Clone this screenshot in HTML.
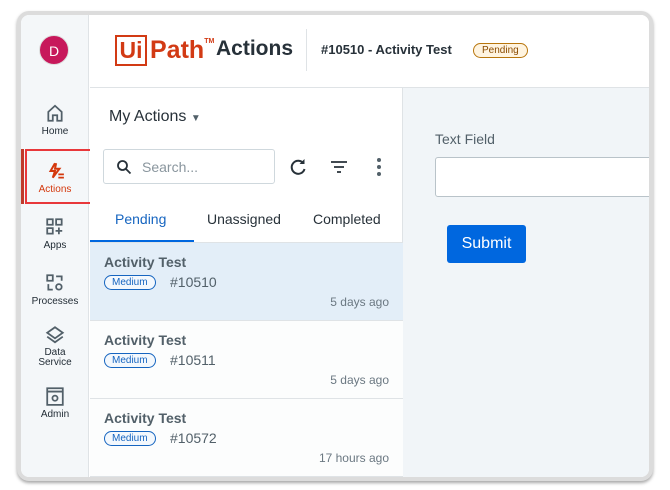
<!DOCTYPE html>
<html><head><meta charset="utf-8"><style>
*{box-sizing:border-box;margin:0;padding:0}
body{width:670px;height:490px;background:#fff;font-family:"Liberation Sans",sans-serif;position:relative;overflow:hidden;color:#273139}
.frame{position:absolute;left:17px;top:11px;width:636px;height:470px;border:4px solid #dcdcdc;border-radius:12px;overflow:hidden;background:#fff;box-shadow:0 2px 3px rgba(0,0,0,.35)}
.side{position:absolute;left:0;top:0;width:68px;height:100%;background:#f4f7f9;border-right:1px solid #dfe3e6}
.av{position:absolute;left:18px;top:20px;width:30px;height:30px;border-radius:50%;background:#c7185b;color:#fff;font-size:14px;text-align:center;line-height:30px;border:1px solid #ddd}
.nav{position:absolute;left:0;width:68px;text-align:center;font-size:10px;color:#1f2a33}
.nav svg{display:block;margin:0 auto 3px}
.hl{position:absolute;left:4px;top:134px;width:67px;height:55px;border:2px solid #e8373a}
.hdr{position:absolute;left:69px;top:0;right:0;height:73px;border-bottom:1px solid #dfe3e6;background:#fff}
.list{position:absolute;left:69px;top:73px;width:313px;bottom:0;background:#fff;border-right:1px solid #dfe3e6}
.right{position:absolute;left:382px;top:73px;right:0;bottom:0;background:#f1f5f8}
.item{position:absolute;left:0;width:313px;height:78px;border-bottom:1px solid #dfe3e6;background:#fcfdfd}
.item .t{position:absolute;left:14px;top:11px;font-size:14px;font-weight:bold;color:#526069}
.item .b{position:absolute;left:14px;top:32px;border:1px solid #1665c0;border-radius:9px;color:#1665c0;font-size:10px;padding:1px 7px;background:#f3f8fd}
.item .n{position:absolute;left:80px;top:31px;font-size:14px;color:#526069}
.item .d{position:absolute;right:14px;top:52px;font-size:12px;color:#6b7882}
</style></head><body>
<div class="frame">
 <div class="side">
  <div class="av">D</div>
  <div class="nav" style="top:88px"><svg width="20" height="20" viewBox="0 0 18 18"><path d="M3 8L9 2.5L15 8V16H11V11H7V16H3Z" fill="none" stroke="#526069" stroke-width="1.6"/></svg>Home</div>
  <div style="position:absolute;left:0;top:134px;width:3px;height:55px;background:#c0392b"></div>
  <div class="hl"></div>
  <div class="nav" style="top:146px;color:#d4380c"><svg width="20" height="20" viewBox="0 0 18 18"><path d="M9 2L5 9H9L7 15L13 7H9L10 2" fill="none" stroke="#d4380c" stroke-width="1.8"/><path d="M12 12H17M12 15H17" stroke="#d4380c" stroke-width="1.6"/></svg>Actions</div>
  <div class="nav" style="top:202px"><svg width="20" height="20" viewBox="0 0 18 18"><path d="M2 2h5v5H2zM10 2h5v5h-5zM2 10h5v5H2z" fill="none" stroke="#526069" stroke-width="1.6"/><path d="M12.5 9.5v6M9.5 12.5h6" stroke="#526069" stroke-width="1.6"/></svg>Apps</div>
  <div class="nav" style="top:258px"><svg width="20" height="20" viewBox="0 0 18 18"><path d="M2 2h5v5H2z" fill="none" stroke="#526069" stroke-width="1.6"/><path d="M10 3h5v4M3 10v5h4" fill="none" stroke="#526069" stroke-width="1.6"/><circle cx="12.5" cy="12.5" r="2.5" fill="none" stroke="#526069" stroke-width="1.6"/></svg>Processes</div>
  <div class="nav" style="top:310px;line-height:10px"><svg width="20" height="20" viewBox="0 0 18 18"><path d="M9 2L16 7L9 12L2 7Z" fill="none" stroke="#526069" stroke-width="1.6"/><path d="M2 10.5L9 15.5L16 10.5" fill="none" stroke="#526069" stroke-width="1.6"/></svg>Data<br>Service</div>
  <div class="nav" style="top:371px"><svg width="20" height="20" viewBox="0 0 18 18"><path d="M2 2h14v15H2zM2 5h14" fill="none" stroke="#526069" stroke-width="1.6"/><circle cx="9" cy="11" r="2.3" fill="none" stroke="#526069" stroke-width="1.6"/></svg>Admin</div>
 </div>
 <div class="hdr">
  <div style="position:absolute;left:25px;top:20px;width:32px;height:31px;border:2.5px solid #d23a14;color:#d23a14;font-size:23px;font-weight:bold;line-height:26px;text-align:center">Ui</div>
  <div style="position:absolute;left:60px;top:20px;color:#d23a14;font-size:25px;font-weight:bold;line-height:30px">Path<sup style="font-size:7px;vertical-align:top;line-height:14px">TM</sup></div>
  <div style="position:absolute;left:126px;top:22px;font-size:21px;font-weight:bold;color:#273139">Actions</div>
  <div style="position:absolute;left:216px;top:14px;width:1px;height:42px;background:#dfe3e6"></div>
  <div style="position:absolute;left:231px;top:27px;font-size:13px;font-weight:bold;color:#273139">#10510 - Activity Test</div>
  <div style="position:absolute;left:383px;top:28px;border:1px solid #b8760d;background:#fff4e0;color:#8a4b00;border-radius:8px;font-size:10px;padding:1px 8px">Pending</div>
 </div>
 <div class="list">
  <div style="position:absolute;left:19px;top:20px;font-size:16px;color:#273139">My Actions <span style="font-size:10px;color:#526069">&#9660;</span></div>
  <div style="position:absolute;left:13px;top:61px;width:172px;height:35px;border:1px solid #cfd8dd;border-radius:3px;background:#fff">
   <svg style="position:absolute;left:12px;top:9px" width="16" height="16" viewBox="0 0 16 16"><circle cx="6.5" cy="6.5" r="4.5" fill="none" stroke="#273139" stroke-width="1.8"/><path d="M10 10L14.5 14.5" stroke="#273139" stroke-width="1.8"/></svg>
   <span style="position:absolute;left:38px;top:9px;font-size:14px;color:#8a969e">Search...</span>
  </div>
  <svg style="position:absolute;left:198px;top:69px" width="20" height="20" viewBox="0 0 20 20"><path d="M15.5 6.5A6.5 6.5 0 1 0 16.5 12" fill="none" stroke="#273139" stroke-width="2"/><path d="M16.5 2V7H11.5Z" fill="#273139"/></svg>
  <svg style="position:absolute;left:240px;top:72px" width="18" height="14" viewBox="0 0 18 14"><path d="M1 2H17M4 7H14M7 12H11" stroke="#273139" stroke-width="1.8"/></svg>
  <svg style="position:absolute;left:286px;top:69px" width="6" height="20" viewBox="0 0 6 20"><circle cx="3" cy="3" r="2" fill="#526069"/><circle cx="3" cy="10" r="2" fill="#526069"/><circle cx="3" cy="17" r="2" fill="#526069"/></svg>
  <div style="position:absolute;left:25px;top:123px;font-size:14px;color:#1665c0">Pending</div>
  <div style="position:absolute;left:117px;top:123px;font-size:14px;color:#273139">Unassigned</div>
  <div style="position:absolute;left:223px;top:123px;font-size:14px;color:#273139">Completed</div>
  <div style="position:absolute;left:0;top:152px;width:104px;height:3px;background:#0067df"></div>
  <div style="position:absolute;left:0;top:154px;width:313px;height:1px;background:#dfe3e6"></div>
  <div class="item" style="top:155px;background:#e3eef8"><div class="t">Activity Test</div><div class="b">Medium</div><div class="n">#10510</div><div class="d">5 days ago</div></div>
  <div class="item" style="top:233px"><div class="t">Activity Test</div><div class="b">Medium</div><div class="n">#10511</div><div class="d">5 days ago</div></div>
  <div class="item" style="top:311px"><div class="t">Activity Test</div><div class="b">Medium</div><div class="n">#10572</div><div class="d">17 hours ago</div></div>
 </div>
 <div class="right">
  <div style="position:absolute;left:32px;top:43px;font-size:14px;color:#526069">Text Field</div>
  <div style="position:absolute;left:32px;top:69px;width:240px;height:40px;background:#fff;border:1px solid #b9c3c9;border-radius:3px"></div>
  <div style="position:absolute;left:44px;top:137px;width:79px;height:38px;background:#0067df;border-radius:3px;color:#fff;font-size:16px;text-align:center;line-height:38px">Submit</div>
 </div>
</div>
</body></html>
